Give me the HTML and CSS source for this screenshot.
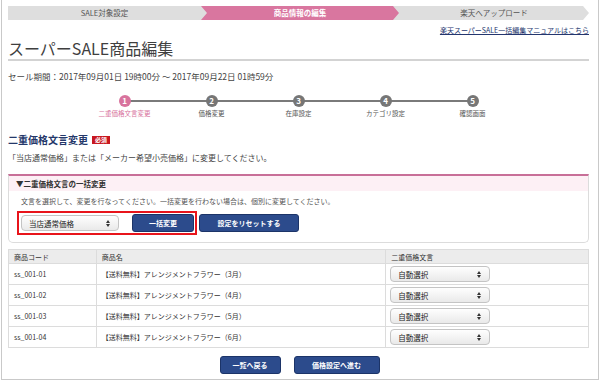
FILE: index.html
```html
<!DOCTYPE html>
<html lang="ja">
<head>
<meta charset="utf-8">
<title>スーパーSALE商品編集</title>
<link rel="stylesheet" href="styles.css">
</head>
<body>
<div class="frame">
  <nav class="crumbs">
    <div class="crumb">SALE対象設定</div>
    <div class="crumb crumb-active">商品情報の編集</div>
    <div class="crumb">楽天へアップロード</div>
  </nav>
  <div class="manual"><a href="#">楽天スーパーSALE一括編集マニュアルはこちら</a></div>
  <h1 class="title">スーパーSALE商品編集</h1>
  <p class="period">セール期間：2017年09月01日 19時00分 〜 2017年09月22日 01時59分</p>

  <ol class="steps">
    <li class="step step-current"><span class="dot">1</span><span class="label">二重価格文言変更</span></li>
    <li class="step"><span class="dot">2</span><span class="label">価格変更</span></li>
    <li class="step"><span class="dot">3</span><span class="label">在庫設定</span></li>
    <li class="step"><span class="dot">4</span><span class="label">カテゴリ設定</span></li>
    <li class="step step-last"><span class="dot">5</span><span class="label">確認画面</span></li>
  </ol>

  <h2 class="heading">二重価格文言変更<span class="badge">必須</span></h2>
  <p class="note">「当店通常価格」または「メーカー希望小売価格」に変更してください。</p>

  <section class="panel">
    <div class="panel-head">▼二重価格文言の一括変更</div>
    <div class="panel-body">
      <p class="panel-text">文言を選択して、変更を行なってください。一括変更を行わない場合は、個別に変更してください。</p>
      <div class="panel-row">
        <div class="highlight">
          <div class="select select-wide"><span>当店通常価格</span><svg class="arrows" width="4" height="7" viewBox="0 0 4 7"><polygon points="0,3 2,0 4,3"/><polygon points="0,4 4,4 2,7"/></svg></div>
          <button class="btn btn-bulk">一括変更</button>
        </div>
        <button class="btn btn-reset">設定をリセットする</button>
      </div>
    </div>
  </section>

  <table class="items">
    <thead>
      <tr><th class="c-code">商品コード</th><th class="c-name">商品名</th><th class="c-text">二重価格文言</th></tr>
    </thead>
    <tbody>
      <tr><td class="c-code">ss_001-01</td><td class="c-name">【送料無料】アレンジメントフラワー（3月）</td><td class="c-text"><div class="select"><span>自動選択</span><svg class="arrows" width="4" height="7" viewBox="0 0 4 7"><polygon points="0,3 2,0 4,3"/><polygon points="0,4 4,4 2,7"/></svg></div></td></tr>
      <tr><td class="c-code">ss_001-02</td><td class="c-name">【送料無料】アレンジメントフラワー（4月）</td><td class="c-text"><div class="select"><span>自動選択</span><svg class="arrows" width="4" height="7" viewBox="0 0 4 7"><polygon points="0,3 2,0 4,3"/><polygon points="0,4 4,4 2,7"/></svg></div></td></tr>
      <tr><td class="c-code">ss_001-03</td><td class="c-name">【送料無料】アレンジメントフラワー（5月）</td><td class="c-text"><div class="select"><span>自動選択</span><svg class="arrows" width="4" height="7" viewBox="0 0 4 7"><polygon points="0,3 2,0 4,3"/><polygon points="0,4 4,4 2,7"/></svg></div></td></tr>
      <tr><td class="c-code">ss_001-04</td><td class="c-name">【送料無料】アレンジメントフラワー（6月）</td><td class="c-text"><div class="select"><span>自動選択</span><svg class="arrows" width="4" height="7" viewBox="0 0 4 7"><polygon points="0,3 2,0 4,3"/><polygon points="0,4 4,4 2,7"/></svg></div></td></tr>
    </tbody>
  </table>

  <div class="actions">
    <button class="btn btn-back">一覧へ戻る</button>
    <button class="btn btn-next">価格設定へ進む</button>
  </div>
</div>
</body>
</html>
```

FILE: styles.css
```css
* { box-sizing: border-box; }
html, body { margin: 0; padding: 0; background: #fff; }
body {
  font-family: "Noto Sans CJK JP", "Noto Sans", "Liberation Sans", sans-serif;
  color: #3c3c3c;
  width: 600px;
  height: 381px;
  overflow: hidden;
}
.frame {
  margin-left: 1px;
  width: 598px;
  height: 380px;
  border: 1px solid #c9c9c9;
  border-top: none;
  padding: 6px 9px 0 6px;
}

/* breadcrumb */
.crumbs {
  display: flex;
  height: 14px;
  background: #dedede;
  clip-path: polygon(0 0, calc(100% - 6px) 0, 100% 50%, calc(100% - 6px) 100%, 0 100%);
}
.crumb {
  flex: 0 0 auto;
  font-size: 7.5px;
  line-height: 14px;
  text-align: center;
  color: #555;
}
.crumb:nth-child(1) { width: 193px; }
.crumb:nth-child(2) { width: 198px; }
.crumb:nth-child(3) { width: 190px; }
.crumb-active {
  background: #d9769f;
  color: #fff;
  font-weight: bold;
  clip-path: polygon(0 0, calc(100% - 6px) 0, 100% 50%, calc(100% - 6px) 100%, 0 100%, 6px 50%);
}

.manual {
  margin-top: 5px;
  text-align: right;
  font-size: 7px;
  line-height: 11px;
}
.manual a { color: #24366e; text-decoration: underline; }

.title {
  margin: 1px 0 0;
  font-size: 16px;
  font-weight: normal;
  line-height: 22px;
  color: #3f3f3f;
  border-bottom: 2px solid #d3d3d3;
}
.period {
  margin: 9px 0 0;
  font-size: 8.5px;
  line-height: 12px;
  color: #444;
}

/* steps */
.steps {
  list-style: none;
  margin: 13px auto 0;
  padding: 0;
  width: 435px;
  display: flex;
}
.step {
  width: 87px;
  display: flex;
  flex-direction: column;
  align-items: center;
  position: relative;
}
.step::after {
  content: "";
  position: absolute;
  left: 50%;
  width: 87px;
  top: 5px;
  height: 2px;
  background: #7a7a7a;
}
.step-last::after { display: none; }
.dot {
  position: relative;
  z-index: 1;
  width: 12px;
  height: 12px;
  border-radius: 50%;
  background: #767676;
  color: #fff;
  font-size: 8px;
  font-weight: bold;
  line-height: 12px;
  text-align: center;
}
.step-current .dot { background: #d8739d; }
.label {
  margin-top: 2px;
  font-size: 6.5px;
  line-height: 9px;
  color: #555;
  white-space: nowrap;
}
.step-current .label { color: #d8739d; }

/* heading */
.heading {
  margin: 15px 0 0;
  font-size: 10px;
  line-height: 14px;
  font-weight: bold;
  color: #25386a;
  display: flex;
  align-items: center;
}
.badge {
  margin-left: 4px;
  background: #c8171f;
  color: #fff;
  font-size: 6px;
  line-height: 8px;
  padding: 0 3px;
  font-weight: bold;
}
.note {
  margin: 5px 0 0;
  font-size: 8px;
  line-height: 12px;
  color: #444;
}

/* panel */
.panel {
  margin-top: 10px;
  border: 1px solid #dcdcdc;
  border-top: 2px solid #c86f98;
  border-radius: 0 0 5px 5px;
}
.panel-head {
  background: #fdf0f5;
  font-size: 7.5px;
  font-weight: bold;
  line-height: 15px;
  padding-left: 7px;
  color: #333;
}
.panel-body {
  padding: 5px 0 7px 12px;
}
.panel-text {
  margin: 0;
  font-size: 7px;
  line-height: 11px;
  color: #555;
}
.panel-row {
  margin-top: 4px;
  margin-left: -4px;
  display: flex;
  align-items: center;
}
.highlight {
  display: flex;
  align-items: center;
  border: 2px solid #e8141b;
  padding: 1px 1px 1px 2px;
}
.select {
  width: 100px;
  height: 16px;
  border: 1px solid #c4c4c4;
  border-radius: 4px;
  background: linear-gradient(#fefefe, #e9e9e9);
  display: flex;
  align-items: center;
  justify-content: space-between;
  padding: 0 8px 0 7px;
  font-size: 7.5px;
  color: #222;
}
.select-wide { width: 98px; }
.arrows { fill: #333; }

.btn {
  font-family: inherit;
  height: 18px;
  border: 1px solid #1c3468;
  border-radius: 3px;
  background: #2c4b8c;
  color: #fff;
  font-size: 7px;
  font-weight: bold;
  padding: 0;
  cursor: pointer;
}
.btn-bulk { width: 62px; margin-left: 13px; }
.btn-reset { width: 100px; margin-left: 2px; }

/* table */
.items {
  margin-top: 6px;
  width: 100%;
  border-collapse: collapse;
  border: 1px solid #dcdcdc;
  font-size: 7px;
  color: #333;
}
.items th, .items td {
  border: 1px solid #dcdcdc;
  text-align: left;
  padding: 0 0 0 5px;
  font-weight: normal;
}
.items th {
  background: #ececec;
  height: 14px;
  line-height: 12px;
  font-size: 7px;
}
.items td { height: 21px; }
.items .c-code { width: 88px; }
.items .c-name { width: 290px; }
.items .c-text { width: 203px; }
.items td.c-text { padding-left: 4px; }

/* actions */
.actions {
  margin-top: 8px;
  display: flex;
  justify-content: center;
  gap: 13px;
  padding-left: 2px;
}
.btn-back { width: 61px; }
.btn-next { width: 86px; }
```
